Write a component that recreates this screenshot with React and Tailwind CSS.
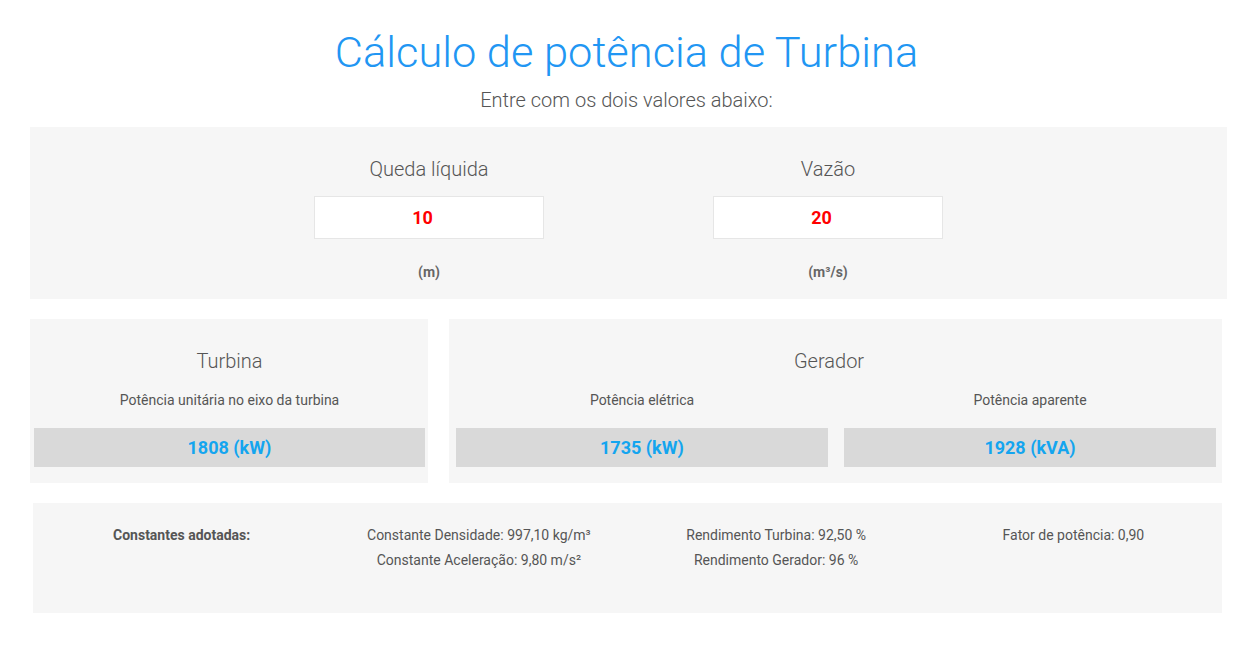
import React from "react";

export default function App() {
  return (
    <div className="w-[1257px] min-h-[649px] bg-white text-[#555] font-['Roboto',sans-serif]">
      <h1 className="pt-[26px] pr-[4px] text-center text-[43.4px] leading-[54px] font-light text-[#2196f3]">
        Cálculo de potência de Turbina
      </h1>
      <p className="mt-[7px] pr-[4px] text-center text-[20px] leading-[26px] font-light text-[#555]">
        Entre com os dois valores abaixo:
      </p>

      <div className="mx-[30px] mt-[14px] h-[172px] bg-[#f6f6f6] grid grid-cols-12">
        <div className="col-start-3 col-span-4 flex flex-col items-center pt-[28px]">
          <div className="text-[20px] leading-[28px] font-light text-[#555]">Queda líquida</div>
          <div className="mt-[13px] w-[230px] h-[43px] bg-white border border-[#e6e6e6] flex items-center justify-center pr-[13px] text-[18px] font-bold text-[#ff0000]">
            10
          </div>
          <div className="mt-[24px] text-[14px] leading-[18px] font-bold text-[#666]">(m)</div>
        </div>
        <div className="col-start-7 col-span-4 flex flex-col items-center pt-[28px]">
          <div className="text-[20px] leading-[28px] font-light text-[#555]">Vazão</div>
          <div className="mt-[13px] w-[230px] h-[43px] bg-white border border-[#e6e6e6] flex items-center justify-center pr-[13px] text-[18px] font-bold text-[#ff0000]">
            20
          </div>
          <div className="mt-[24px] text-[14px] leading-[18px] font-bold text-[#666]">(m³/s)</div>
        </div>
      </div>

      <div className="mx-[30px] mt-[20px] flex gap-[21px]">
        <div className="w-[398px] h-[164px] bg-[#f6f6f6] pl-[4px] pr-[3px] pt-[28px]">
          <div className="text-center text-[20px] leading-[28px] font-light text-[#555]">Turbina</div>
          <div className="mt-[15px] text-center text-[14px] leading-[20px] text-[#555]">
            Potência unitária no eixo da turbina
          </div>
          <div className="mt-[18px] h-[39px] bg-[#d9d9d9] flex items-center justify-center text-[18px] font-bold text-[#14a5ef]">
            1808 (kW)
          </div>
        </div>
        <div className="w-[773px] h-[164px] bg-[#f6f6f6] pl-[7px] pr-[6px] pt-[28px]">
          <div className="text-center pr-[14px] text-[20px] leading-[28px] font-light text-[#555]">Gerador</div>
          <div className="mt-[15px] grid grid-cols-2 gap-[16px]">
            <div>
              <div className="text-center text-[14px] leading-[20px] text-[#555]">Potência elétrica</div>
              <div className="mt-[18px] h-[39px] bg-[#d9d9d9] flex items-center justify-center text-[18px] font-bold text-[#14a5ef]">
                1735 (kW)
              </div>
            </div>
            <div>
              <div className="text-center text-[14px] leading-[20px] text-[#555]">Potência aparente</div>
              <div className="mt-[18px] h-[39px] bg-[#d9d9d9] flex items-center justify-center text-[18px] font-bold text-[#14a5ef]">
                1928 (kVA)
              </div>
            </div>
          </div>
        </div>
      </div>

      <div className="ml-[33px] mr-[35px] mt-[20px] h-[110px] bg-[#f6f6f6] grid grid-cols-4 pt-[20px] text-[14px] leading-[25px] text-[#555] text-center">
        <div className="font-bold">Constantes adotadas:</div>
        <div>
          <div>Constante Densidade: 997,10 kg/m³</div>
          <div>Constante Aceleração: 9,80 m/s²</div>
        </div>
        <div>
          <div>Rendimento Turbina: 92,50 %</div>
          <div>Rendimento Gerador: 96 %</div>
        </div>
        <div>Fator de potência: 0,90</div>
      </div>
    </div>
  );
}
